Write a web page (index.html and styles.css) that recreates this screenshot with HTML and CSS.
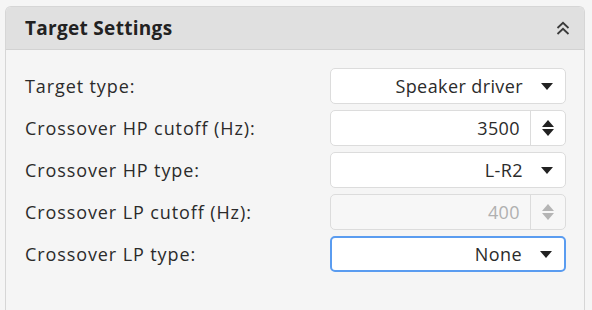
FILE: index.html
```html
<!DOCTYPE html>
<html>
<head>
    <meta name="viewport" content="width=device-width, initial-scale=1">
    <title>Target Settings</title>
    <link rel="stylesheet" href="styles.css">
</head>
<body>
    <div class="panel">
        <div class="panel-header">
            <span class="panel-title">Target Settings</span>
            <svg class="collapse-icon" width="14" height="15" viewBox="0 0 14 15">
                <path d="M1.5 7 L7 1.8 L12.5 7 M1.5 13 L7 7.8 L12.5 13" fill="none" stroke="#3a3a3a" stroke-width="1.8"/>
            </svg>
        </div>

        <div class="panel-body">
            <div class="field-row">
                <label>Target type:</label>
                <div class="control select">
                    <span class="value">Speaker driver</span>
                    <span class="caret"></span>
                </div>
            </div>
            <div class="field-row">
                <label>Crossover HP cutoff (Hz):</label>
                <div class="control spin">
                    <span class="value">3500</span>
                    <span class="spin-btn"><span class="up"></span><span class="down"></span></span>
                </div>
            </div>
            <div class="field-row">
                <label>Crossover HP type:</label>
                <div class="control select">
                    <span class="value">L-R2</span>
                    <span class="caret"></span>
                </div>
            </div>
            <div class="field-row">
                <label>Crossover LP cutoff (Hz):</label>
                <div class="control spin disabled">
                    <span class="value">400</span>
                    <span class="spin-btn"><span class="up"></span><span class="down"></span></span>
                </div>
            </div>
            <div class="field-row">
                <label>Crossover LP type:</label>
                <div class="control select focused">
                    <span class="value">None</span>
                    <span class="caret"></span>
                </div>
            </div>
        </div>
    </div>
</body>
</html>
```

FILE: styles.css
```css
body {
    margin: 0;
    padding: 6px 7px 0 5px;
    height: 310px;
    box-sizing: border-box;
    overflow: hidden;
    background-color: #f5f5f5;
    font-family: "Open Sans", Lato, sans-serif;
    color: #2b2b2b;
}

.panel {
    border: 1px solid #d6d6d6;
    border-bottom: none;
    border-radius: 6px 6px 0 0;
    background: #f5f5f5;
    height: 304px;
    box-sizing: border-box;
}

.panel-header {
    display: flex;
    justify-content: space-between;
    align-items: center;
    height: 42px;
    padding: 0 14px 0 19px;
    background: #e0e0e0;
    border-bottom: 1px solid #d2d2d2;
    border-radius: 5px 5px 0 0;
}

.panel-title {
    font-weight: bold;
    font-size: 19px;
    letter-spacing: 0.3px;
    color: #222;
}

.panel-body {
    padding: 18px 18px 0 19px;
    display: flex;
    flex-direction: column;
    gap: 6px;
}

.field-row {
    display: flex;
    justify-content: space-between;
    align-items: center;
    font-size: 18px;
    letter-spacing: 0.4px;
}

.field-row label {
    letter-spacing: 0.9px;
}

.control {
    display: flex;
    align-items: center;
    width: 236px;
    height: 36px;
    box-sizing: border-box;
    background: white;
    border: 1px solid #dcdcdc;
    border-radius: 5px;
}

.control .value {
    flex: 1;
    text-align: right;
    padding-right: 10px;
}

.caret {
    width: 0;
    height: 0;
    margin: 0 12px 0 8px;
    border-left: 6px solid transparent;
    border-right: 6px solid transparent;
    border-top: 7px solid #222;
}

.spin-btn {
    display: flex;
    flex-direction: column;
    align-items: center;
    justify-content: center;
    gap: 2px;
    width: 34px;
    height: 100%;
    border-left: 1px solid #dcdcdc;
}

.spin-btn .up,
.spin-btn .down {
    width: 0;
    height: 0;
    border-left: 6px solid transparent;
    border-right: 6px solid transparent;
}

.spin-btn .up {
    border-bottom: 7px solid #222;
}

.spin-btn .down {
    border-top: 7px solid #222;
}

.control.disabled {
    background: #f7f7f7;
    color: #b0b0b0;
}

.control.disabled .up {
    border-bottom-color: #b5b5b5;
}

.control.disabled .down {
    border-top-color: #b5b5b5;
}

.control.focused {
    border: 2px solid #5a9cf0;
}
```
